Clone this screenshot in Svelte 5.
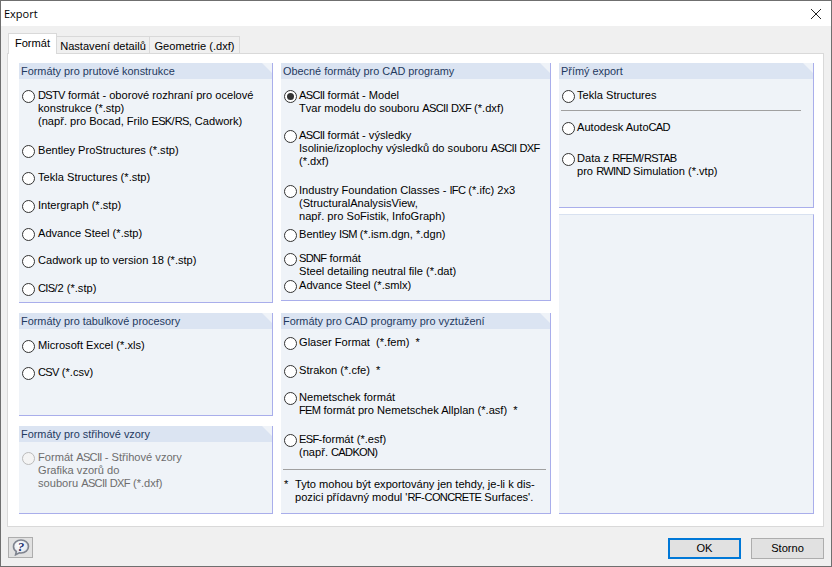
<script>
  const col1 = [
    { title: 'Formáty pro prutové konstrukce', cls: 'p11', items: [
      { l: ['DSTV formát - oborové rozhraní pro ocelové', 'konstrukce (*.stp)', '(např. pro Bocad, Frilo ESK/RS, Cadwork)'], g: 10 },
      { l: ['Bentley ProStructures (*.stp)'], g: 16 },
      { l: ['Tekla Structures (*.stp)'], g: 14 },
      { l: ['Intergraph (*.stp)'], g: 15 },
      { l: ['Advance Steel (*.stp)'], g: 15 },
      { l: ['Cadwork up to version 18 (*.stp)'], g: 14 },
      { l: ['CIS/2 (*.stp)'], g: 15 }
    ]},
    { title: 'Formáty pro tabulkové procesory', cls: 'p12', items: [
      { l: ['Microsoft Excel (*.xls)'], g: 10 },
      { l: ['CSV (*.csv)'], g: 14 }
    ]},
    { title: 'Formáty pro střihové vzory', cls: 'p13', disabled: true, items: [
      { l: ['Formát ASCII - Střihové vzory', 'Grafika vzorů do', 'souboru ASCII DXF (*.dxf)'], g: 9 }
    ]}
  ];
  const col2a = { title: 'Obecné formáty pro CAD programy', cls: 'p21', items: [
    { l: ['ASCII formát - Model', 'Tvar modelu do souboru ASCII DXF (*.dxf)'], g: 10, on: true },
    { l: ['ASCII formát - výsledky', 'Isolinie/izoplochy výsledků do souboru ASCII DXF', '(*.dxf)'], g: 14 },
    { l: ['Industry Foundation Classes - IFC (*.ifc) 2x3', '(StructuralAnalysisView,', 'např. pro SoFistik, InfoGraph)'], g: 16 },
    { l: ['Bentley ISM (*.ism.dgn, *.dgn)'], g: 5 },
    { l: ['SDNF formát', 'Steel detailing neutral file (*.dat)'], g: 11 },
    { l: ['Advance Steel (*.smlx)'], g: 1 }
  ]};
  const col2b = { title: 'Formáty pro CAD programy pro vyztužení', cls: 'p22', items: [
    { l: ['Glaser Format  (*.fem)  *'], g: 7 },
    { l: ['Strakon (*.cfe)  *'], g: 15 },
    { l: ['Nemetschek formát', 'FEM formát pro Nemetschek Allplan (*.asf)  *'], g: 14 },
    { l: ['ESF-formát (*.esf)', '(např. CADKON)'], g: 16 }
  ]};
  const rest = [
    { l: ['Autodesk AutoCAD'], g: 10 },
    { l: ['Data z RFEM/RSTAB', 'pro RWIND Simulation (*.vtp)'], g: 18 }
  ];
  // Runs of capitals are set a little tighter, as the reference's face has narrower caps.
  const runs = (s) => s.split(/([A-Z]{2,})/);
  const note = ['Tyto mohou být exportovány jen tehdy, je-li k dis-', "pozici přídavný modul 'RF-CONCRETE Surfaces'."];
</script>

{#snippet styled(line)}
  {#each runs(line) as r, i}{#if i % 2}<span class="caps">{r}</span>{:else}{r}{/if}{/each}
{/snippet}

{#snippet radio(it, disabled)}
  <div class="radio" class:disabled style:margin-top="{it.g}px">
    <span class="dot" class:on={it.on}></span>
    <div class="lines">
      {#each it.l as line}<div>{@render styled(line)}</div>{/each}
    </div>
  </div>
{/snippet}

{#snippet head(title)}
  <div class="head">{title}</div>
{/snippet}

<div class="win">
  <header class="title">
    <span>Export</span>
    <svg class="close" width="12" height="12" viewBox="0 0 12 12"><path d="M1 1 L11 11 M11 1 L1 11" stroke="#222" stroke-width="1" fill="none"/></svg>
  </header>
  <div class="body">
    <div class="tabs">
      <div class="tab active">Formát</div>
      <div class="tab t2">Nastavení detailů</div>
      <div class="tab t3">Geometrie (.dxf)</div>
    </div>
    <div class="sheet">
      <div class="col c1">
        {#each col1 as p}
          <section class="panel {p.cls}">
            {@render head(p.title)}
            {#each p.items as it}{@render radio(it, p.disabled)}{/each}
          </section>
        {/each}
      </div>
      <div class="col c2">
        <section class="panel {col2a.cls}">
          {@render head(col2a.title)}
          {#each col2a.items as it}{@render radio(it, false)}{/each}
        </section>
        <section class="panel {col2b.cls}">
          {@render head(col2b.title)}
          {#each col2b.items as it}{@render radio(it, false)}{/each}
          <hr class="rule r2" />
          <div class="note">
            <span class="star">*</span>
            <div>
              {#each note as line}<div>{@render styled(line)}</div>{/each}
            </div>
          </div>
        </section>
      </div>
      <div class="col c3">
        <section class="panel p31">
          {@render head('Přímý export')}
          {@render radio({ l: ['Tekla Structures'], g: 10 }, false)}
          <hr class="rule r1" />
          {#each rest as it}{@render radio(it, false)}{/each}
        </section>
        <section class="panel p32"></section>
      </div>
    </div>
    <footer class="foot">
      <button class="help" aria-label="Nápověda">
        <svg width="18" height="17" viewBox="0 0 18 17">
          <defs>
            <radialGradient id="hg" cx="0.4" cy="0.35" r="0.75">
              <stop offset="0" stop-color="#ffffff"/>
              <stop offset="0.65" stop-color="#e6e9ef"/>
              <stop offset="1" stop-color="#a0a6b3"/>
            </radialGradient>
          </defs>
          <path d="M9 1 C4.8 1 1.5 3.8 1.5 7.5 C1.5 9.6 2.6 11.4 4.3 12.5 L3.6 15.8 L7.4 13.9 C7.9 14 8.5 14 9 14 C13.2 14 16.5 11.2 16.5 7.5 C16.5 3.8 13.2 1 9 1 Z" fill="url(#hg)" stroke="#7f848f" stroke-width="1.6"/>
          <text x="9" y="12" text-anchor="middle" class="q">?</text>
        </svg>
      </button>
      <div class="btns">
        <button class="btn ok">OK</button>
        <button class="btn">Storno</button>
      </div>
    </footer>
  </div>
</div>

<style>
  :global(body) { margin: 0; background: #f0f0f0; }
  .win {
    box-sizing: border-box;
    width: 832px;
    height: 567px;
    border: 1px solid #6f6f6f;
    display: flex;
    flex-direction: column;
    font-family: "Liberation Sans", sans-serif;
    font-size: 11.1px;
    line-height: 13px;
    color: #000;
    background: #f0f0f0;
  }
  .title {
    height: 25px;
    flex: none;
    background: #fff;
    display: flex;
    align-items: center;
    justify-content: space-between;
    padding: 0 9px 0 3px;
    font-family: "Open Sans", sans-serif;
    font-size: 11px;
  }
  .body { flex: 1; display: flex; flex-direction: column; padding: 7px 7px 0 6px; min-height: 0; }
  .tabs { display: flex; height: 20px; flex: none; padding-left: 1px; position: relative; z-index: 1; }
  .tab {
    box-sizing: border-box;
    height: 18px;
    margin-top: 3px;
    padding-top: 3px;
    text-align: center;
    background: #f0f0f0;
    border: 1px solid #d9d9d9;
    border-left: 0;
    white-space: nowrap;
  }
  .t2 { width: 93px; }
  .t3 { width: 90px; }
  .tab.active {
    width: 49px;
    height: 21px;
    margin-top: 0;
    padding-top: 3px;
    background: #fff;
    border-left: 1px solid #d9d9d9;
    border-bottom: 0;
  }
  .sheet {
    box-sizing: border-box;
    height: 474px;
    background: #fff;
    border: 1px solid #d9d9d9;
    padding: 9px 9px 12px 11px;
    display: flex;
    gap: 8px;
  }
  .col { display: flex; flex-direction: column; justify-content: space-between; }
  .c1 { width: 254px; }
  .c2 { width: 270px; }
  .c3 { width: 255px; }
  .panel {
    box-sizing: border-box;
    background: #eff3f8;
    border-right: 1px solid #a9aeeb;
    border-bottom: 1px solid #a9aeeb;
    display: flow-root;
  }
  .p11 { height: 240px; }
  .p12 { height: 103px; }
  .p13 { height: 88px; }
  .p21 { height: 238px; }
  .p22 { height: 201px; }
  .p31 { height: 145px; }
  .p32 { height: 300px; border-top: 1px solid #d8e1f0; }
  .head {
    height: 16px;
    font-size: 10.9px;
    line-height: 16px;
    background: #dbe4f2;
    color: #1f3a5f;
    padding-left: 2px;
    clip-path: polygon(0 0, calc(100% - 10px) 0, 100% 10px, 100% 100%, 0 100%);
  }
  .radio { display: flex; padding-left: 3px; }
  .radio.disabled { color: #6d6d6d; }
  .dot {
    box-sizing: border-box;
    flex: none;
    width: 13px;
    height: 13px;
    border: 1px solid #333;
    border-radius: 50%;
    background: #fff;
    margin-right: 3px;
    margin-top: 1px;
    margin-bottom: -1px;
    position: relative;
  }
  .c2 .dot, .c3 .dot { margin-right: 2px; }
  .radio.disabled .dot { border-color: #bbb; background: #f4f4f4; }
  .dot.on::after {
    content: '';
    position: absolute;
    left: 2px;
    top: 2px;
    width: 7px;
    height: 7px;
    border-radius: 50%;
    background: #333;
  }
  .lines { white-space: pre; }
  .caps { letter-spacing: -0.7px; }
  .rule { border: 0; height: 1px; background: #a0a0a0; margin: 0; }
  .r1 { margin: 8px 12px 0 2px; }
  .r2 { margin: 10px 4px 0 2px; }
  .note { display: flex; margin-top: 8px; padding-left: 3px; white-space: pre; }
  .star { width: 11px; flex: none; }
  .foot { flex: 1; display: flex; justify-content: space-between; align-items: flex-start; padding-top: 10px; }
  .help {
    width: 25px;
    height: 21px;
    padding: 0;
    margin-left: 1px;
    background: #e1e1e1;
    border: 1px solid #adadad;
    display: flex;
    align-items: center;
    justify-content: center;
  }
  .q { font: italic bold 13px "Liberation Serif", serif; fill: #1c2f6e; }
  .btns { display: flex; gap: 10px; margin-top: 1px; }
  .btn {
    box-sizing: border-box;
    width: 73px;
    height: 21px;
    padding: 0;
    font: inherit;
    background: #e1e1e1;
    border: 1px solid #adadad;
    color: #000;
  }
  .btn.ok { border: 2px solid #0078d7; }
</style>
